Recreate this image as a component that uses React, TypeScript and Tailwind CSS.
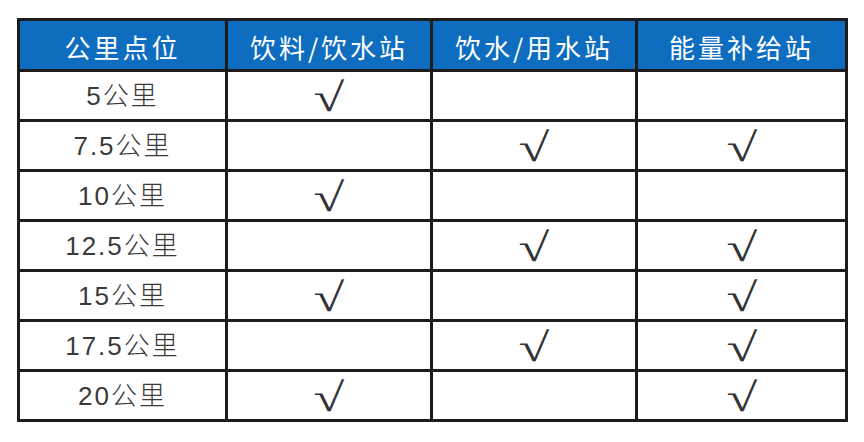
const headers = ['公里点位', '饮料/饮水站', '饮水/用水站', '能量补给站']

const rows: { km: string; marks: boolean[] }[] = [
  { km: '5公里', marks: [true, false, false] },
  { km: '7.5公里', marks: [false, true, true] },
  { km: '10公里', marks: [true, false, false] },
  { km: '12.5公里', marks: [false, true, true] },
  { km: '15公里', marks: [true, false, true] },
  { km: '17.5公里', marks: [false, true, true] },
  { km: '20公里', marks: [true, false, true] },
]

export default function App() {
  return (
    <div className="w-[864px] h-[442px] bg-white pt-[18px] pl-[17px]">
      <table
        className="w-[828px] border-collapse table-fixed border-[3px] border-[#1c1c1c]"
        style={{ fontFamily: '"Liberation Sans", "Noto Sans CJK SC", sans-serif' }}
      >
        <colgroup>
          <col className="w-[208px]" />
          <col className="w-[205px]" />
          <col className="w-[205px]" />
          <col className="w-[210px]" />
        </colgroup>
        <thead>
          <tr className="h-[51px] bg-[#0e6dbf]">
            {headers.map((h) => (
              <th
                key={h}
                className="border-[3px] border-[#1c1c1c] p-0 text-[26px] font-normal tracking-[3px] text-white leading-none pt-[3px]"
                style={{ fontFamily: '"Noto Sans CJK SC", sans-serif' }}
              >
                {h}
              </th>
            ))}
          </tr>
        </thead>
        <tbody>
          {rows.map((r) => (
            <tr key={r.km} className="h-[50px]">
              <td className="border-[3px] border-[#1c1c1c] p-0 text-center text-[26px] font-light leading-none tracking-[2px] text-[#3a3a3a]">
                {r.km}
              </td>
              {r.marks.map((m, i) => (
                <td
                  key={i}
                  className="border-[3px] border-[#1c1c1c] p-0 text-center text-[40px] leading-none text-[#333]"
                  style={{ fontFamily: '"Liberation Serif", serif' }}
                >
                  {m ? <span className="inline-block scale-x-[1.4] translate-y-[2px]">√</span> : ''}
                </td>
              ))}
            </tr>
          ))}
        </tbody>
      </table>
    </div>
  )
}
